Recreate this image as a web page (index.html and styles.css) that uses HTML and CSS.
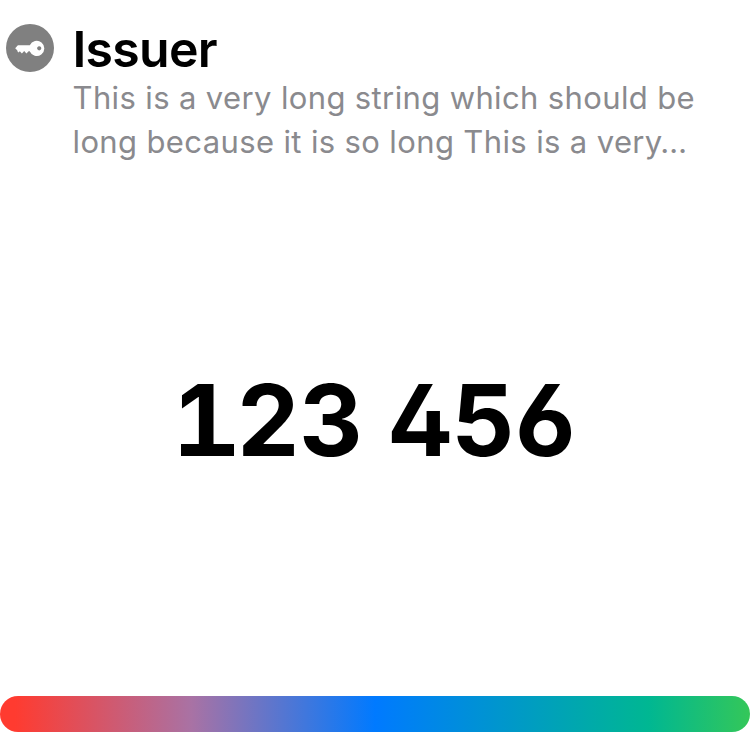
FILE: index.html
```html
<!DOCTYPE html>
<html lang="en">
<head>
<meta charset="utf-8">
<title>Issuer</title>
<link rel="stylesheet" href="styles.css">
</head>
<body>
<main class="card">
  <header class="header">
    <svg class="icon" viewBox="0 0 48 48" aria-hidden="true">
      <circle cx="24" cy="24" r="24" fill="#808080"/>
      <path fill="#fff" fill-rule="evenodd" d="M9.2 24.2 11.9 21.2H23.8A7.6 7.6 0 1 1 23.7 27.2H22.6L20.4 29.4 18.2 27 15.9 29.6 13.8 27.2 12.5 28.4 11.4 27.2V26.4ZM33.2 22.2a2.1 2.1 0 1 0 .01 0Z"/>
    </svg>
    <div class="info">
      <h1 class="issuer">Issuer</h1>
      <p class="account"><span class="line first">This is a very long string which should be</span> <span class="line second">long because it is so long This is a very…</span></p>
    </div>
  </header>
  <div class="code">
    <div class="group"><span class="digit one">1</span><span class="digit">2</span><span class="digit">3</span></div>
    <div class="group"><span class="digit">4</span><span class="digit">5</span><span class="digit">6</span></div>
  </div>
  <div class="bar"></div>
</main>
</body>
</html>
```
FILE: styles.css
```css
* { box-sizing: border-box; margin: 0; }
body { background: #fff; font-family: Inter, sans-serif; }
.card { height: 750px; display: flex; flex-direction: column; padding: 24px 0 18px; overflow: hidden; }
.header { display: flex; gap: 18.5px; padding-left: 6px; }
.icon { width: 48px; height: 48px; flex: none; }
.issuer { font-size: 50px; line-height: 50px; height: 52px; font-weight: 600; letter-spacing: -0.75px; color: #000; }
.account { font-size: 31px; line-height: 44px; color: #8a8a8e; white-space: nowrap; letter-spacing: 0.37px; }
.line { display: block; }
.code { flex: 1; display: flex; align-items: center; justify-content: center; gap: 27px; padding: 0 0 19px 1px; font-size: 98.5px; font-weight: 700; line-height: 120px; font-feature-settings: "cv02", "cv03"; }
.group { display: flex; }
.digit { display: flex; justify-content: center; width: 62.5px; }
.one { position: relative; padding-right: 14px; }
/* foot serif of the numeral one */
.one::after { content: ""; position: absolute; left: 6px; bottom: 25px; width: 53px; height: 12px; background: #000; }
.bar { height: 36px; border-radius: 18px; background: linear-gradient(90deg, #ff3b30 2%, #a972a4 25.5%, #007aff 50%, #00b792 86.5%, #34c759); }
```
